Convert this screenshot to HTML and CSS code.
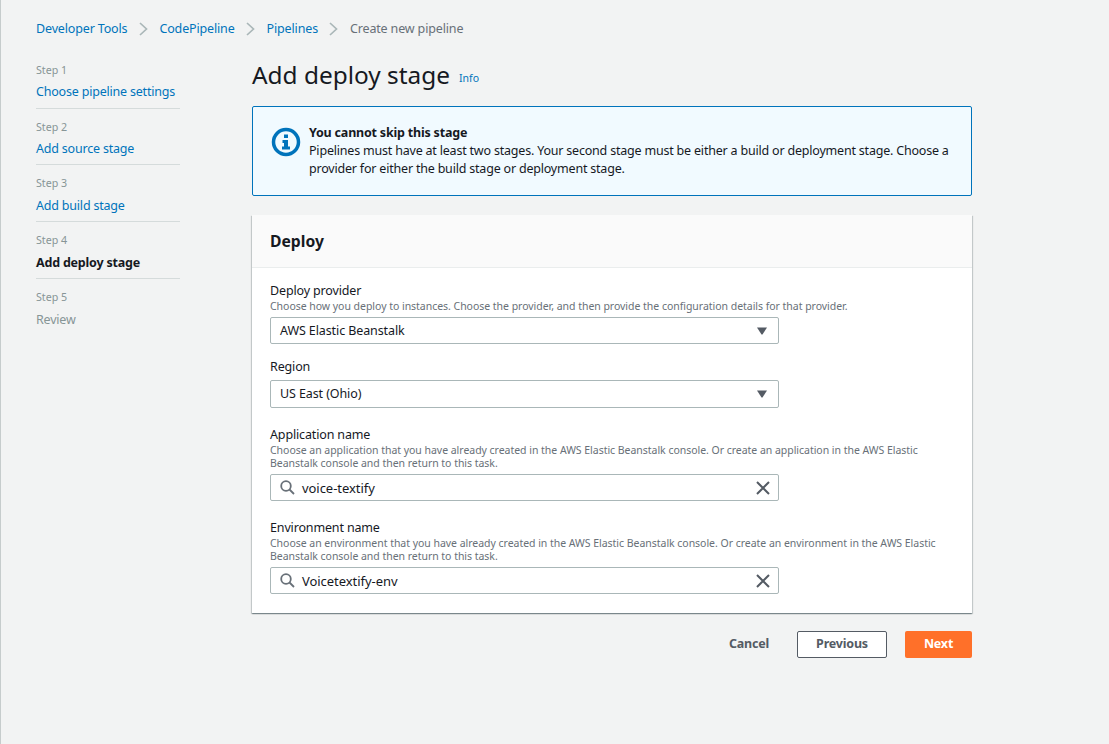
FILE: index.html
```html
<!DOCTYPE html>
<html lang="en">

<head>
    <meta charset="UTF-8">
    <meta name="viewport" content="width=device-width, initial-scale=1.0">
    <title>Create new pipeline</title>
    <link rel="stylesheet" href="styles.css">
</head>

<body>
    <nav class="breadcrumbs">
        <a href="#">Developer Tools</a>
        <svg class="crumb-sep" width="9" height="14" viewBox="0 0 9 14"><path d="M1 1l6.500 6L1 13" /></svg>
        <a href="#">CodePipeline</a>
        <svg class="crumb-sep" width="9" height="14" viewBox="0 0 9 14"><path d="M1 1l6.500 6L1 13" /></svg>
        <a href="#">Pipelines</a>
        <svg class="crumb-sep" width="9" height="14" viewBox="0 0 9 14"><path d="M1 1l6.500 6L1 13" /></svg>
        <span class="crumb-current">Create new pipeline</span>
    </nav>

    <div class="layout">
        <ol class="steps">
            <li class="step">
                <small>Step 1</small>
                <a href="#">Choose pipeline settings</a>
            </li>
            <li class="step">
                <small>Step 2</small>
                <a href="#">Add source stage</a>
            </li>
            <li class="step">
                <small>Step 3</small>
                <a href="#">Add build stage</a>
            </li>
            <li class="step">
                <small>Step 4</small>
                <b>Add deploy stage</b>
            </li>
            <li class="step">
                <small>Step 5</small>
                <span class="step-off">Review</span>
            </li>
        </ol>

        <main class="content">
            <div class="page-title">
                <h1>Add deploy stage</h1>
                <a href="#" class="info-link">Info</a>
            </div>

            <div class="alert">
                <svg class="alert-icon" width="30" height="30" viewBox="0 0 30 30">
                    <circle cx="15" cy="15" r="12.500" fill="none" stroke="#0073bb" stroke-width="3.500" />
                    <rect x="13" y="7.500" width="4" height="3.500" fill="#0073bb" />
                    <path d="M11.500 13h5.500v6.500h2v3h-8v-3h2v-3.500h-1.500z" fill="#0073bb" />
                </svg>
                <div class="alert-text">
                    <b>You cannot skip this stage</b>
                    <p>Pipelines must have at least two stages. Your second stage must be either a build or deployment stage. Choose a provider for either the build stage or deployment stage.</p>
                </div>
            </div>

            <section class="card">
                <h2 class="card-head">Deploy</h2>
                <div class="card-body">
                    <div class="field first">
                        <label>Deploy provider</label>
                        <p class="hint">Choose how you deploy to instances. Choose the provider, and then provide the configuration details for that provider.</p>
                        <div class="select">
                            <span>AWS Elastic Beanstalk</span>
                            <svg width="10" height="8" viewBox="0 0 10 8"><path d="M0 0.500h10L5.500 7.500h-1z" fill="#545b64" /></svg>
                        </div>
                    </div>

                    <div class="field">
                        <label>Region</label>
                        <div class="select tall">
                            <span>US East (Ohio)</span>
                            <svg width="10" height="8" viewBox="0 0 10 8"><path d="M0 0.500h10L5.500 7.500h-1z" fill="#545b64" /></svg>
                        </div>
                    </div>

                    <div class="field">
                        <label>Application name</label>
                        <p class="hint">Choose an application that you have already created in the AWS Elastic Beanstalk console. Or create an application in the AWS Elastic Beanstalk console and then return to this task.</p>
                        <div class="search">
                            <svg class="search-icon" width="15" height="15" viewBox="0 0 15 15"><circle cx="6" cy="6" r="4.800" /><path d="M9.500 9.500l4.500 4.500" /></svg>
                            <span>voice-textify</span>
                            <svg class="clear-icon" width="14" height="14" viewBox="0 0 14 14"><path d="M1 1l12 12M13 1L1 13" /></svg>
                        </div>
                    </div>

                    <div class="field">
                        <label>Environment name</label>
                        <p class="hint">Choose an environment that you have already created in the AWS Elastic Beanstalk console. Or create an environment in the AWS Elastic Beanstalk console and then return to this task.</p>
                        <div class="search">
                            <svg class="search-icon" width="15" height="15" viewBox="0 0 15 15"><circle cx="6" cy="6" r="4.800" /><path d="M9.500 9.500l4.500 4.500" /></svg>
                            <span>Voicetextify-env</span>
                            <svg class="clear-icon" width="14" height="14" viewBox="0 0 14 14"><path d="M1 1l12 12M13 1L1 13" /></svg>
                        </div>
                    </div>
                </div>
            </section>

            <div class="actions">
                <button class="btn-link">Cancel</button>
                <button class="btn-normal">Previous</button>
                <button class="btn-primary">Next</button>
            </div>
        </main>
    </div>
</body>

</html>
```

FILE: styles.css
```css
* {
    box-sizing: border-box;
}

body {
    margin: 0;
    height: 744px;
    overflow: hidden;
    background-color: #f2f3f3;
    border-left: 1px solid #c6cccc;
    font-family: "Noto Sans", sans-serif;
    font-size: 12.500px;
    letter-spacing: -0.200px;
    line-height: 18px;
    color: #16191f;
}

a {
    color: #0073bb;
    text-decoration: none;
}

.breadcrumbs {
    display: flex;
    align-items: center;
    height: 18px;
    margin: 20px 0 0 35px;
    letter-spacing: -0.150px;
}

.crumb-sep {
    margin: 0 11.500px;
    fill: none;
    stroke: #aab7b8;
    stroke-width: 1.700;
}

.crumb-current {
    color: #687078;
}

.layout {
    display: flex;
    margin-top: 23px;
    padding-left: 35px;
}

.steps {
    width: 144px;
    margin: 0 72px 0 0;
    padding: 0;
    list-style: none;
}

.step {
    display: flex;
    flex-direction: column;
    height: 47.600px;
    margin-bottom: 9.100px;
    border-bottom: 1px solid #d5dbdb;
}

.step:last-child {
    border-bottom: none;
}

.step small {
    font-size: 10.700px;
    letter-spacing: 0;
    line-height: 18px;
    color: #879596;
    margin-bottom: 4.400px;
}

.step b {
    margin-top: 1px;
}

.step-off {
    margin-top: 1px;
    color: #879596;
}

.content {
    width: 720px;
    margin-top: -1px;
}

.page-title {
    display: flex;
    align-items: flex-start;
    height: 30px;
}

.page-title h1 {
    margin: 0;
    font-size: 24.400px;
    font-weight: 400;
    letter-spacing: 0;
    line-height: 30px;
}

.info-link {
    margin: 9px 0 0 9px;
    font-size: 10.500px;
    letter-spacing: 0;
}

.alert {
    display: flex;
    height: 90px;
    margin-top: 16px;
    padding: 17px 18px;
    background-color: #f1faff;
    border: 1px solid #0073bb;
    border-radius: 2px;
}

.alert-icon {
    flex: none;
    margin: 3px 8px 0 0;
}

.alert-text p {
    margin: 0;
}

.card {
    margin-top: 19px;
    background-color: #fff;
    box-shadow: 0 1px 1px 0 rgba(0, 28, 36, 0.3), 1px 1px 1px 0 rgba(0, 28, 36, 0.15), -1px 1px 1px 0 rgba(0, 28, 36, 0.15);
}

.card-head {
    margin: 0;
    height: 53px;
    padding: 0 18px;
    background-color: #fafafa;
    border-bottom: 1px solid #eaeded;
    font-size: 15.700px;
    font-weight: 700;
    letter-spacing: 0;
    line-height: 52px;
}

.card-body {
    padding: 14px 18px 19px;
}

.field {
    margin-bottom: 18px;
}

.field.first {
    margin-bottom: 14px;
}

.field:last-child {
    margin-bottom: 0;
}

.field label {
    display: block;
    line-height: 18px;
    letter-spacing: -0.150px;
}

.hint {
    margin: 0 0 4px;
    font-size: 10.500px;
    letter-spacing: -0.030px;
    line-height: 13px;
    color: #687078;
}

.select,
.search {
    display: flex;
    align-items: center;
    width: 509px;
    height: 27px;
    background-color: #fff;
    border: 1px solid #aab7b8;
    border-radius: 2px;
}

.select {
    justify-content: space-between;
    padding: 0 11px 0 9px;
    letter-spacing: -0.100px;
}

.select.tall {
    height: 28px;
    margin-top: 4px;
}

.search {
    padding: 0 8px 0 9px;
    font-size: 13px;
    letter-spacing: -0.050px;
}

.search span {
    flex: 1;
    margin-left: 7px;
}

.search-icon {
    fill: none;
    stroke: #687078;
    stroke-width: 1.800;
}

.clear-icon {
    fill: none;
    stroke: #545b64;
    stroke-width: 2;
}

.actions {
    display: flex;
    align-items: center;
    justify-content: flex-end;
    margin-top: 18px;
}

.actions button {
    height: 27px;
    font-family: inherit;
    font-size: 12.500px;
    font-weight: 700;
    letter-spacing: -0.200px;
    border-radius: 2px;
    border: 1px solid transparent;
    padding: 0 0 2px;
}

.btn-link {
    width: 40px;
    margin-right: 29px;
    background: none;
    color: #545b64;
}

.actions .btn-normal {
    width: 90px;
    margin-right: 18px;
    background-color: #fff;
    color: #545b64;
    border-color: #545b64;
}

.btn-primary {
    width: 67px;
    background-color: #ff7029;
    color: #fff;
}
```
